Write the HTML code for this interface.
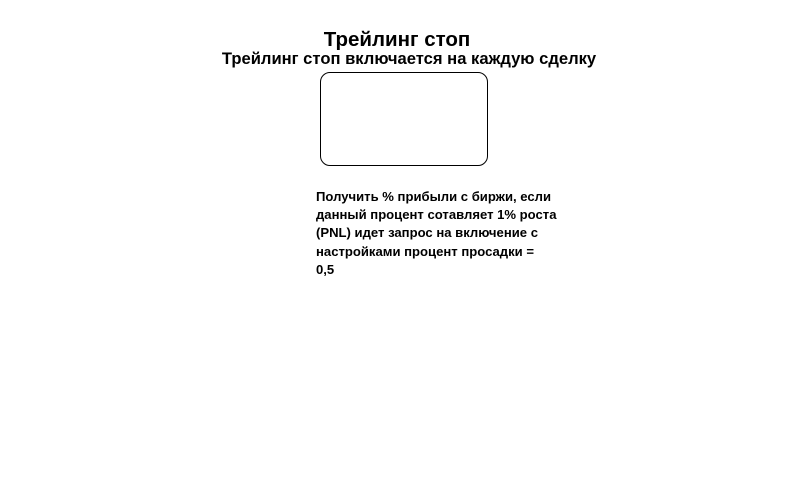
<!DOCTYPE html>
<html><head><meta charset="utf-8"><style>
body{margin:0;width:800px;height:480px;background:#fff;font-family:"Liberation Sans","DejaVu Sans",sans-serif;color:#000;position:relative;overflow:hidden}
.t{position:absolute;left:0;width:794px;text-align:center;font-weight:bold}
.box{position:absolute;left:320px;top:72px;width:166px;height:92px;border:1px solid #000;border-radius:10px}
.p{position:absolute;left:316px;top:188px;width:250px;font-size:13.1px;font-weight:bold;line-height:18.2px}
</style></head><body>
<div class="t" style="top:28px;font-size:20.5px">Трейлинг стоп</div>
<div class="t" style="top:49px;font-size:16.6px;left:0;width:818px">Трейлинг стоп включается на каждую сделку</div>
<div class="box"></div>
<div class="p">Получить % прибыли с биржи, если данный процент сотавляет 1% роста (PNL) идет запрос на включение с настройками процент просадки =<br>0,5</div>
</body></html>
